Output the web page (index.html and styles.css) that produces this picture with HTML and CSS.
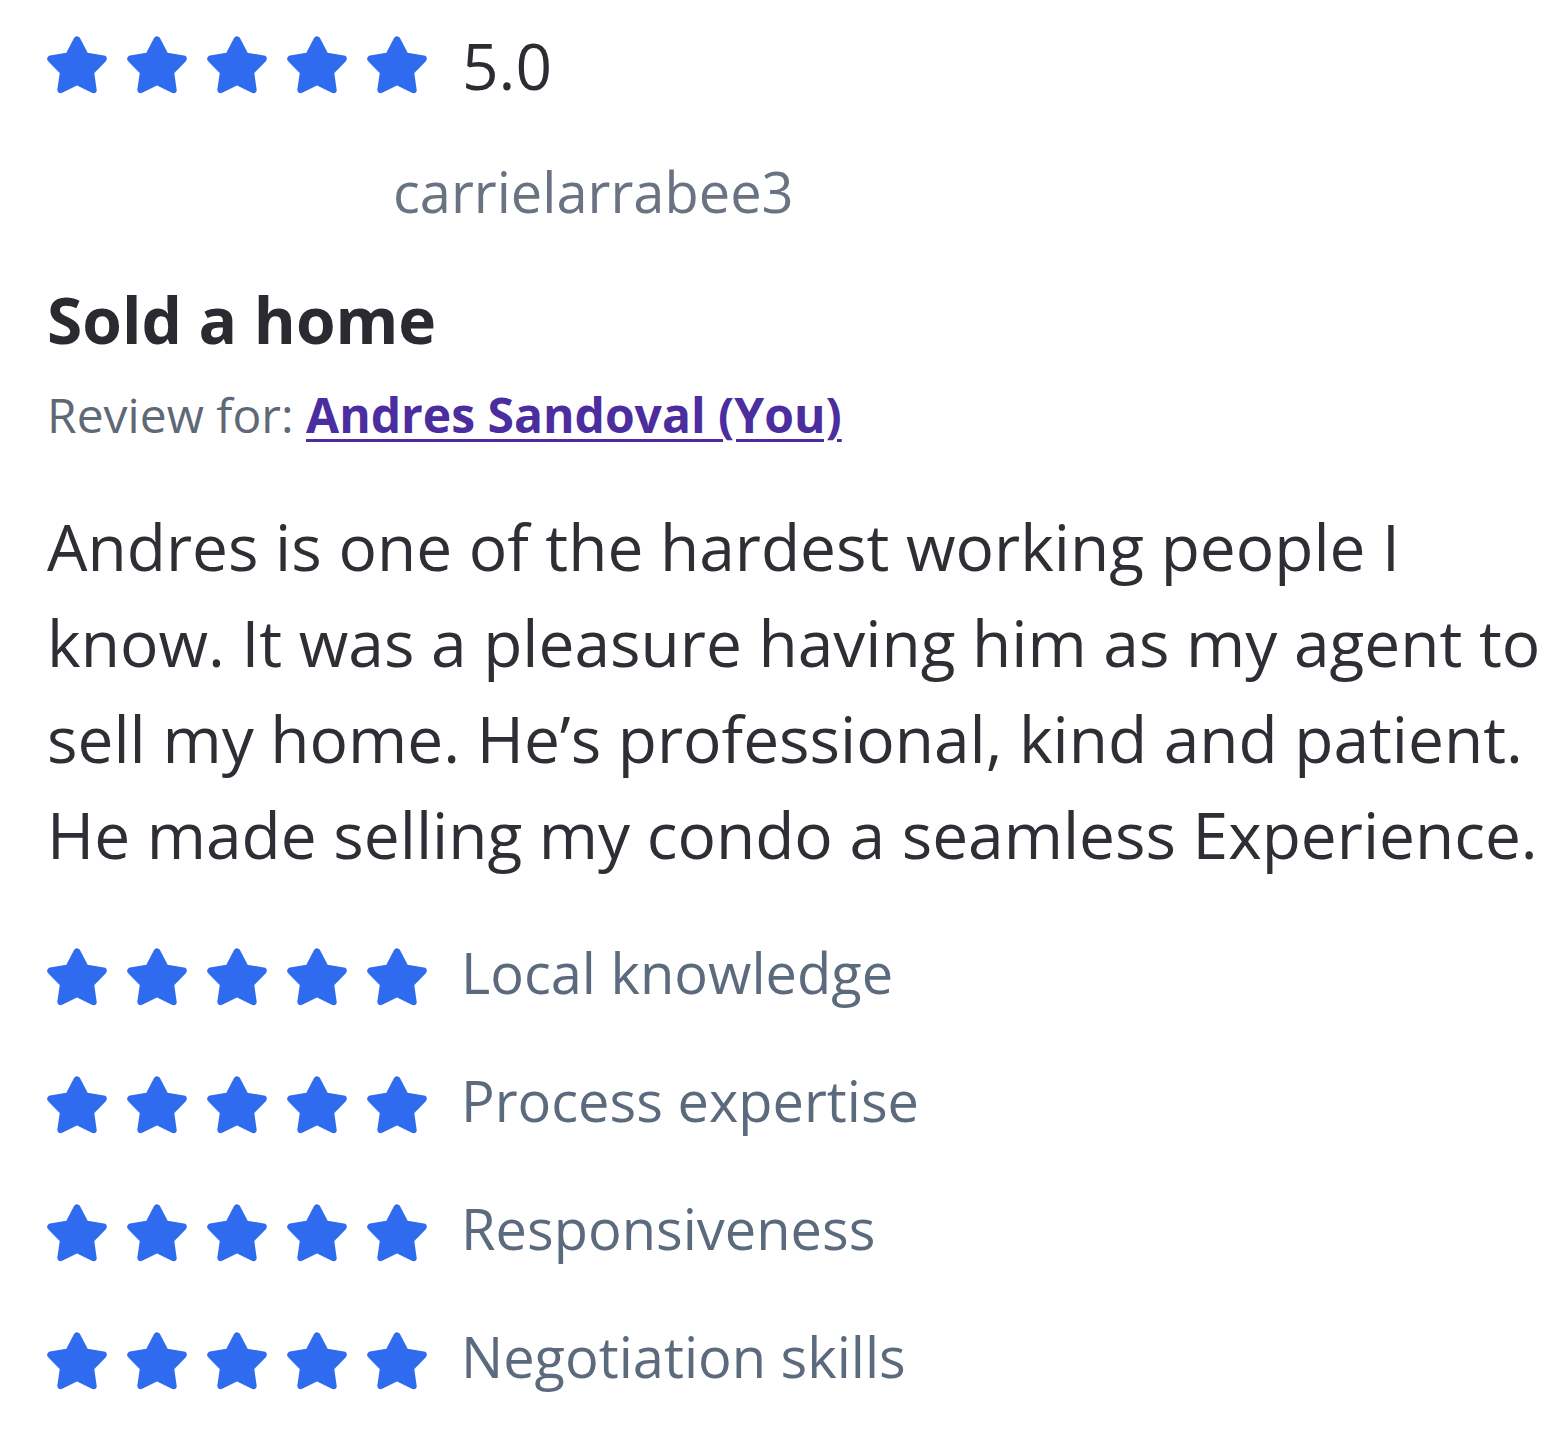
FILE: index.html
```html
<!DOCTYPE html>
<html lang="en">
<head>
<meta charset="utf-8">
<title>Review</title>
<link rel="stylesheet" href="styles.css">
</head>
<body>
<svg width="0" height="0" class="defs" aria-hidden="true">
  <defs>
    <symbol id="star" viewBox="1.2 1.3 21.6 21.6">
      <polygon points="12,2.6 15.06,8.39 21.51,9.51 16.95,14.21 17.88,20.69 12,17.8 6.12,20.69 7.05,14.21 2.49,9.51 8.94,8.39" fill="#2f6bef" stroke="#2f6bef" stroke-width="2.4" stroke-linejoin="round"/>
    </symbol>
  </defs>
</svg>
<main class="review">
  <div class="rating-row overall">
    <div class="stars">
      <svg class="star"><use href="#star"/></svg>
      <svg class="star"><use href="#star"/></svg>
      <svg class="star"><use href="#star"/></svg>
      <svg class="star"><use href="#star"/></svg>
      <svg class="star"><use href="#star"/></svg>
    </div>
    <span class="score">5.0</span>
  </div>
  <div class="username">carrielarrabee3</div>
  <h1 class="title">Sold a home</h1>
  <div class="review-for">Review for: <a class="agent-link" href="#">Andres Sandoval (You)</a></div>
  <p class="body-text">Andres is one of the hardest working people I know. It was a pleasure having him as my agent to sell my home. He’s professional, kind and patient. He made selling my condo a seamless Experience.</p>
  <div class="categories">
    <div class="rating-row category">
      <div class="stars">
        <svg class="star"><use href="#star"/></svg>
        <svg class="star"><use href="#star"/></svg>
        <svg class="star"><use href="#star"/></svg>
        <svg class="star"><use href="#star"/></svg>
        <svg class="star"><use href="#star"/></svg>
      </div>
      <span class="label">Local knowledge</span>
    </div>
    <div class="rating-row category">
      <div class="stars">
        <svg class="star"><use href="#star"/></svg>
        <svg class="star"><use href="#star"/></svg>
        <svg class="star"><use href="#star"/></svg>
        <svg class="star"><use href="#star"/></svg>
        <svg class="star"><use href="#star"/></svg>
      </div>
      <span class="label">Process expertise</span>
    </div>
    <div class="rating-row category">
      <div class="stars">
        <svg class="star"><use href="#star"/></svg>
        <svg class="star"><use href="#star"/></svg>
        <svg class="star"><use href="#star"/></svg>
        <svg class="star"><use href="#star"/></svg>
        <svg class="star"><use href="#star"/></svg>
      </div>
      <span class="label">Responsiveness</span>
    </div>
    <div class="rating-row category">
      <div class="stars">
        <svg class="star"><use href="#star"/></svg>
        <svg class="star"><use href="#star"/></svg>
        <svg class="star"><use href="#star"/></svg>
        <svg class="star"><use href="#star"/></svg>
        <svg class="star"><use href="#star"/></svg>
      </div>
      <span class="label">Negotiation skills</span>
    </div>
  </div>
</main>
</body>
</html>
```

FILE: styles.css
```css
html, body {
  margin: 0;
  padding: 0;
  background: #ffffff;
}

body {
  font-family: "Open Sans", "Noto Sans", sans-serif;
  color: #2c2c33;
}

.defs {
  position: absolute;
  width: 0;
  height: 0;
  overflow: hidden;
}

.review {
  padding: 36px 0 0 47px;
  width: 1515px;
  box-sizing: content-box;
}

.rating-row {
  display: flex;
  align-items: center;
  height: 60px;
}

.stars {
  display: flex;
  gap: 20px;
}

.star {
  width: 60px;
  height: 60px;
  display: block;
}

.score {
  margin-left: 35px;
  font-size: 64px;
  line-height: 1;
  color: #2c2c33;
}

.username {
  margin: 55px 0 0 346px;
  font-size: 56px;
  line-height: 80px;
  color: #6a7381;
}

.title {
  margin: 49px 0 0;
  font-size: 64px;
  font-weight: 700;
  line-height: 80px;
  color: #2a2a30;
}

.review-for {
  margin-top: 23px;
  font-size: 48px;
  line-height: 64px;
  color: #5f6875;
}

.agent-link {
  color: #4b2d9f;
  font-weight: 700;
  text-decoration: underline;
  text-decoration-thickness: 3px;
  text-underline-offset: 6px;
}

.body-text {
  margin: 52px 0 0;
  font-size: 64px;
  line-height: 96px;
  color: #2e2e35;
}

.categories {
  margin-top: 31px;
  display: flex;
  flex-direction: column;
}

.category {
  height: 128px;
}

.label {
  margin: 0 0 12px 34px;
  font-size: 56px;
  line-height: 1;
  color: #5c6a7e;
}
```
